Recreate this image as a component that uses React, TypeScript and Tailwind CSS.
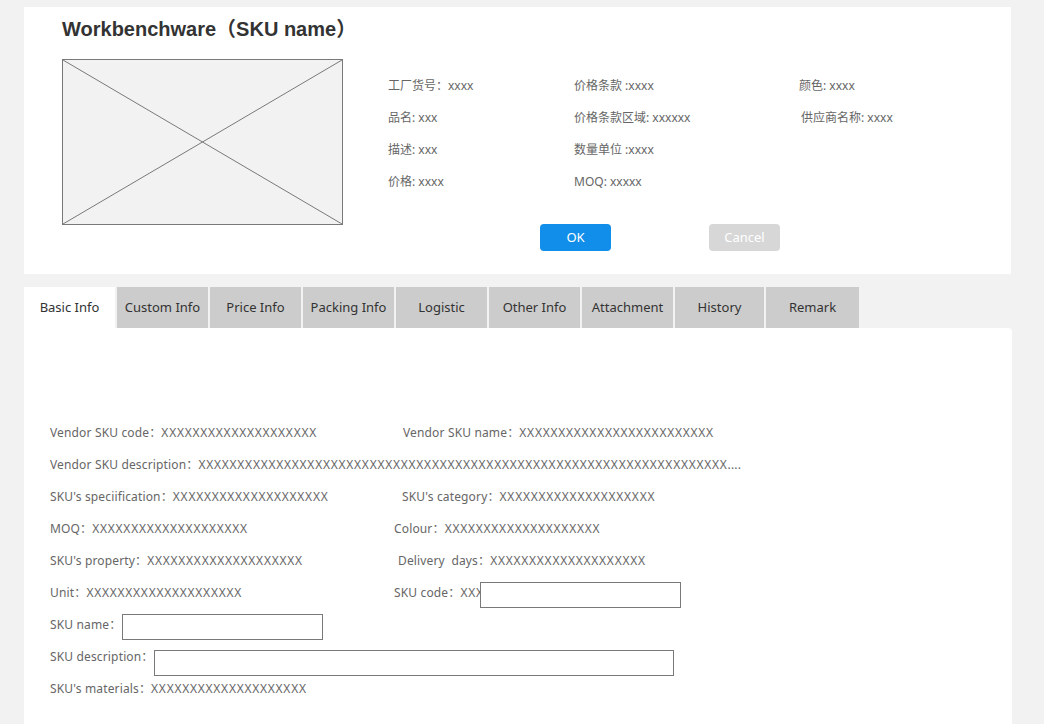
import React from "react";

const cjk = { fontFamily: '"Noto Sans", "Noto Sans CJK SC", sans-serif' };

function InfoCell({ text, className = "" }: { text: string; className?: string }) {
  return (
    <div className={"h-8 flex items-center text-[12px] text-[#666] " + className}>{text}</div>
  );
}

function Row({ children }: { children: React.ReactNode }) {
  return <div className="h-8 flex items-center whitespace-nowrap">{children}</div>;
}

function Xs({ n }: { n: number }) {
  return <span className="tracking-[0.75px]">{"X".repeat(n)}</span>;
}

export default function App() {
  const tabs: { label: string; w: string; active?: boolean }[] = [
    { label: "Basic Info", w: "w-[91px]", active: true },
    { label: "Custom Info", w: "w-[91px]" },
    { label: "Price Info", w: "w-[91px]" },
    { label: "Packing Info", w: "w-[91px]" },
    { label: "Logistic", w: "w-[91px]" },
    { label: "Other Info", w: "w-[91px]" },
    { label: "Attachment", w: "w-[91px]" },
    { label: "History", w: "w-[89px]" },
    { label: "Remark", w: "w-[93px]" },
  ];
  return (
    <div className="min-h-[724px] bg-[#f2f2f2] pt-[7px] pl-[24px] overflow-hidden" style={cjk}>
      {/* Top card */}
      <div className="w-[987px] h-[267px] bg-white pl-[38px] pt-[5px]">
        <div
          className="text-[20px] font-bold text-[#333] leading-[34px]"
          style={{ fontFamily: '"Liberation Sans", "Noto Sans CJK SC", sans-serif' }}
        >
          Workbenchware（SKU name）
        </div>
        <div className="flex mt-[13px]">
          <div className="w-[281px] h-[166px] border border-[#797979] bg-[#f2f2f2] shrink-0">
            <svg width="279" height="164" viewBox="0 0 279 164" className="block">
              <line x1="0" y1="0" x2="279" y2="164" stroke="#797979" strokeWidth="1" />
              <line x1="279" y1="0" x2="0" y2="164" stroke="#797979" strokeWidth="1" />
            </svg>
          </div>
          <div className="ml-[45px] pt-[11px]">
            <div className="flex">
              <div className="w-[186px]">
                <InfoCell text="工厂货号：xxxx" />
                <InfoCell text="品名: xxx" />
                <InfoCell text="描述: xxx" />
                <InfoCell text="价格: xxxx" />
              </div>
              <div className="w-[225px]">
                <InfoCell text="价格条款 :xxxx" />
                <InfoCell text="价格条款区域: xxxxxx" />
                <InfoCell text="数量单位 :xxxx" />
                <InfoCell text="MOQ: xxxxx" />
              </div>
              <div>
                <InfoCell text="颜色: xxxx" />
                <InfoCell text="供应商名称: xxxx" className="pl-[2px]" />
              </div>
            </div>
            <div className="flex mt-[26px] ml-[152px] gap-[98px]">
              <button className="w-[71px] h-[27px] rounded-[4px] bg-[#108ee9] text-white text-[13px]">
                OK
              </button>
              <button className="w-[71px] h-[27px] rounded-[4px] bg-[#d7d7d7] text-white text-[13px]">
                Cancel
              </button>
            </div>
          </div>
        </div>
      </div>

      {/* Tabs */}
      <div className="flex gap-[2px] mt-[13px] h-[41px]">
        {tabs.map((t) => (
          <div
            key={t.label}
            className={
              t.w +
              " h-[41px] flex items-center justify-center text-[13px] text-[#333] " +
              (t.active ? "bg-white" : "bg-[#cccccc]")
            }
          >
            {t.label}
          </div>
        ))}
      </div>

      {/* Content card */}
      <div className="w-[988px] min-h-[400px] bg-white rounded-tr-[4px] pl-[26px] pt-[89px] text-[12px] text-[#666] tracking-[0.15px]">
        <Row>
          <span className="w-[353px]">Vendor SKU code：<Xs n={20} /></span>
          <span>Vendor SKU name：<Xs n={25} /></span>
        </Row>
        <Row>
          <span>
            Vendor SKU description：<Xs n={68} />....
          </span>
        </Row>
        <Row>
          <span className="w-[352px]">SKU's speciification：<Xs n={20} /></span>
          <span>SKU's category：<Xs n={20} /></span>
        </Row>
        <Row>
          <span className="w-[344px]">MOQ：<Xs n={20} /></span>
          <span>Colour：<Xs n={20} /></span>
        </Row>
        <Row>
          <span className="w-[348px]">SKU's property：<Xs n={20} /></span>
          <span>Delivery&nbsp; days：<Xs n={20} /></span>
        </Row>
        <Row>
          <span className="w-[344px]">Unit：<Xs n={20} /></span>
          <span className="w-[86px] overflow-hidden">SKU code：<Xs n={20} /></span>
          <div className="w-[201px] h-[26px] border border-[#797979] bg-white mt-[3px]" />
        </Row>
        <Row>
          <span className="w-[72px]">SKU name：</span>
          <div className="w-[201px] h-[26px] border border-[#797979] bg-white mt-[3px]" />
        </Row>
        <Row>
          <span className="w-[104px]">SKU description：</span>
          <div className="w-[520px] h-[26px] border border-[#797979] bg-white mt-[11px]" />
        </Row>
        <Row>
          <span>SKU's materials：<Xs n={20} /></span>
        </Row>
      </div>
    </div>
  );
}
